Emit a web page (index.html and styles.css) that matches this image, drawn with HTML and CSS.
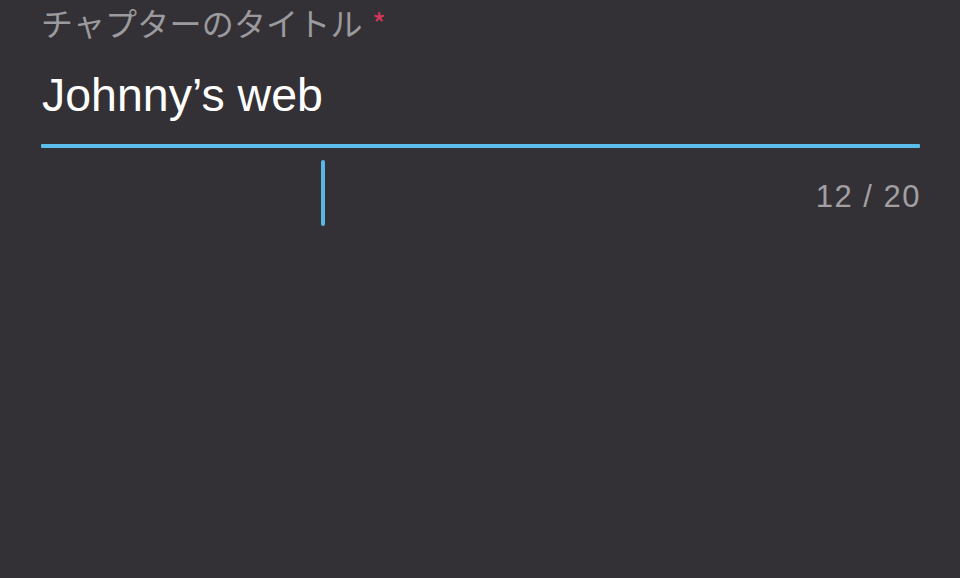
FILE: index.html
```html
<!DOCTYPE html>
<html lang="ja">
<head>
<meta charset="utf-8">
<link rel="stylesheet" href="styles.css">
</head>
<body>
<div class="field">
  <div class="label">チャプターのタイトル <span class="req">*</span></div>
  <div class="input">Johnny’s web</div>
  <div class="line"></div>
  <div class="meta">
    <span class="caret"></span>
    <span class="count">12 / 20</span>
  </div>
</div>
</body>
</html>
```
FILE: styles.css
```css
html, body {
  margin: 0;
  padding: 0;
  background: #333135;
  width: 960px;
  height: 578px;
  overflow: hidden;
}
.field {
  padding: 0 40px 0 41px;
  font-family: "Liberation Sans", Arial, "Noto Sans CJK JP", sans-serif;
}
.label {
  font-family: "Noto Sans CJK JP", sans-serif;
  font-size: 32px;
  line-height: 44px;
  color: #9b9a9e;
  letter-spacing: 0.2px;
}
.req {
  color: #d8365b;
  font-size: 30px;
  margin-left: 2px;
}
.input {
  font-size: 46.5px;
  line-height: 56px;
  color: #ffffff;
  margin-top: 22px;
  padding-left: 1px;
}
.line {
  height: 4px;
  background: #5bbde9;
  margin-top: 21px;
  border-radius: 1px;
}
.meta {
  position: relative;
  display: flex;
  justify-content: flex-end;
  padding-top: 30px;
}
.count {
  font-size: 31px;
  line-height: 38px;
  color: #a19fa4;
  letter-spacing: 1.5px;
  word-spacing: 0px;
  margin-right: -1px;
}
.caret {
  position: absolute;
  left: 280px;
  top: 12px;
  width: 4px;
  height: 66px;
  border-radius: 2px;
  background: #5ab8e6;
}
```
